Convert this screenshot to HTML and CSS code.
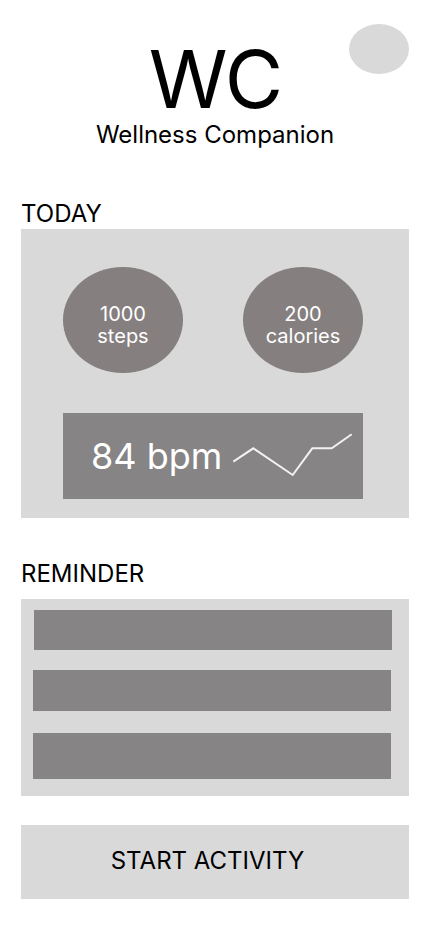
FILE: index.html
```html
<!DOCTYPE html>
<html lang="en">

<head>
  <meta charset="UTF-8">
  <title>Wellness Companion</title>
  <link rel="stylesheet" href="styles.css">
</head>

<body>
  <header class="top">
    <div class="brand">
      <h1 class="logo">WC</h1>
      <p class="tagline">Wellness Companion</p>
    </div>
    <div class="avatar"></div>
  </header>

  <!-- today summary -->
  <h2 class="label label-today">TODAY</h2>
  <section class="card today">
    <div class="stats">
      <div class="stat">1000<br>steps</div>
      <div class="stat">200<br>calories</div>
    </div>
    <div class="pulse">
      <span class="bpm">84 bpm</span>
      <svg class="spark" width="125" height="48" viewBox="0 0 125 48">
        <polyline points="3.3,31.7 23.3,18.3 62.7,45 82.3,18.3 101.7,18.3 121.7,4.3" fill="none" stroke="#f2f2f2" stroke-width="2" />
      </svg>
    </div>
  </section>

  <!-- reminders -->
  <h2 class="label label-reminder">REMINDER</h2>
  <section class="card reminders">
    <div class="bar bar-1"></div>
    <div class="bar bar-2"></div>
    <div class="bar bar-3"></div>
  </section>

  <button class="start">START ACTIVITY</button>
</body>

</html>
```

FILE: styles.css
```css
html {
  background: white;
}

body {
  margin: 0;
  font-family: Inter, "Noto Sans", sans-serif;
  color: #000;
}

.top {
  display: grid;
  grid-template-columns: 1fr auto 1fr;
  padding-top: 24px;
}

.brand {
  grid-column: 2;
  margin-top: 15px;
  text-align: center;
}

.logo {
  margin: 0;
  font-size: 80px;
  font-weight: normal;
  line-height: 80px;
  letter-spacing: -3px;
  text-indent: -1px;
}

.tagline {
  margin: 1px 0 0;
  font-size: 24px;
  line-height: 29px;
}

.avatar {
  grid-column: 3;
  justify-self: end;
  width: 60px;
  height: 50px;
  margin-right: 21px;
  border-radius: 50%;
  background: #d9d9d9;
}

.label {
  margin: 0 21px;
  font-size: 24px;
  font-weight: normal;
  line-height: 29px;
}

.label-today {
  margin-top: 50px;
  margin-bottom: 1px;
}

.label-reminder {
  margin-top: 41px;
  margin-bottom: 11px;
}

.card {
  margin: 0 21px;
  background: #d9d9d9;
}

.today {
  padding: 38px 0 19px 42px;
}

.stats {
  display: flex;
  gap: 60px;
}

.stat {
  display: flex;
  align-items: center;
  justify-content: center;
  width: 120px;
  height: 106px;
  box-sizing: border-box;
  padding-top: 9px;
  border-radius: 50%;
  background: #857f7f;
  color: white;
  font-size: 20px;
  line-height: 22px;
  text-align: center;
}

.pulse {
  display: flex;
  align-items: center;
  width: 300px;
  height: 86px;
  margin-top: 40px;
  box-sizing: border-box;
  padding: 0 8px 0 28px;
  background: #868484;
}

.bpm {
  color: white;
  font-size: 36px;
}

.spark {
  margin-left: auto;
  margin-top: -4px;
}

.reminders {
  display: flex;
  flex-direction: column;
  padding: 11px 0 17px 12px;
}

.bar {
  width: 358px;
  background: #868484;
}

.bar-1 {
  height: 40px;
  margin-left: 1px;
}

.bar-2 {
  height: 41px;
  margin-top: 20px;
}

.bar-3 {
  height: 46px;
  margin-top: 22px;
}

.start {
  display: block;
  width: 388px;
  height: 74px;
  margin: 29px 21px 0;
  padding: 0 15px 3px 0;
  border: 0;
  background: #d9d9d9;
  color: #000;
  font: normal 24px/29px Inter, "Noto Sans", sans-serif;
}
```
